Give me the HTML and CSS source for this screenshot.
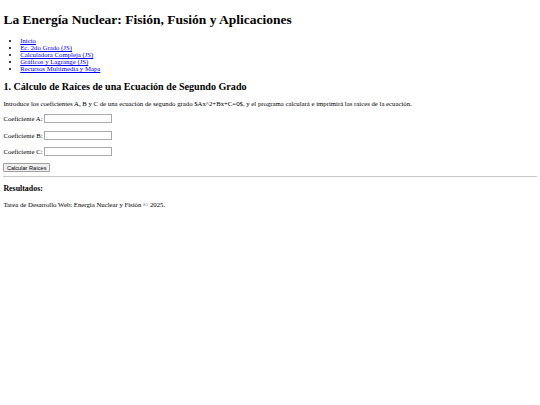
FILE: index.html
```html
<!DOCTYPE html>
<html lang="es">
<head>
<meta charset="utf-8">
<title>La Energía Nuclear</title>
<link rel="stylesheet" href="styles.css">
</head>
<body class="page">
<header>
<h1 class="title">La Energía Nuclear: Fisión, Fusión y Aplicaciones</h1>
<nav>
<ul class="menu">
<li><a href="#">Inicio</a></li>
<li><a href="#">Ec. 2do Grado (JS)</a></li>
<li><a href="#">Calculadora Compleja (JS)</a></li>
<li><a href="#">Gráficos y Lagrange (JS)</a></li>
<li><a href="#">Recursos Multimedia y Mapa</a></li>
</ul>
</nav>
</header>
<main>
<section>
<h2 class="section-title">1. Cálculo de Raíces de una Ecuación de Segundo Grado</h2>
<p class="text">Introduce los coeficientes A, B y C de una ecuación de segundo grado $Ax^2+Bx+C=0$, y el programa calculará e imprimirá las raíces de la ecuación.</p>
<form class="form">
<p class="row"><label for="a">Coeficiente A:</label><input class="field" type="text" id="a"></p>
<p class="row"><label for="b">Coeficiente B:</label><input class="field" type="text" id="b"></p>
<p class="row"><label for="c">Coeficiente C:</label><input class="field" type="text" id="c"></p>
<button class="btn" type="button">Calcular Raíces</button>
</form>
<hr class="rule">
<h3 class="results-title">Resultados:</h3>
<div class="results"></div>
</section>
</main>
<footer>
<p class="text">Tarea de Desarrollo Web: Energía Nuclear y Fisión © 2025.</p>
</footer>
</body>
</html>
```

FILE: styles.css
```css
html {
  background: #ffffff;
}

.page {
  margin: 3.375px;
  font-family: "Liberation Serif", "Times New Roman", serif;
  font-size: 6.75px;
  color: #000000;
}

.title {
  font-size: 13.5px;
  margin: 9.045px 0;
}

.menu {
  margin: 6.75px 0;
  padding-left: 16.875px;
}

.menu a {
  color: #0000ee;
}

.section-title {
  font-size: 10.125px;
  margin: 8.404px 0;
}

.text {
  margin: 6.75px 0;
}

.form {
  margin: 0;
}

.row {
  display: flex;
  align-items: center;
  gap: 1.7px;
  height: 9.703px;
  margin: 6.75px 0;
}

.field,
.btn {
  font-family: "Liberation Sans", Arial, sans-serif;
  font-size: 5.625px;
}

.field {
  width: 63.7px;
  height: 6.8px;
  padding: 0 1px;
  border: 1px solid #a9a9a9;
  border-radius: 0;
  box-sizing: content-box;
}

.btn {
  display: block;
  height: 8.86px;
  padding: 0 2.5px;
  line-height: 6px;
  border: 1px solid #a0a0a0;
  border-radius: 1px;
  background: #efefef;
  color: #000000;
}

.rule {
  margin: 3.375px 0;
  height: 0;
  border: 0;
  border-top: 1px solid #c8c8c8;
}

.results-title {
  font-size: 7.9px;
  margin: 7.9px 0;
}
```
